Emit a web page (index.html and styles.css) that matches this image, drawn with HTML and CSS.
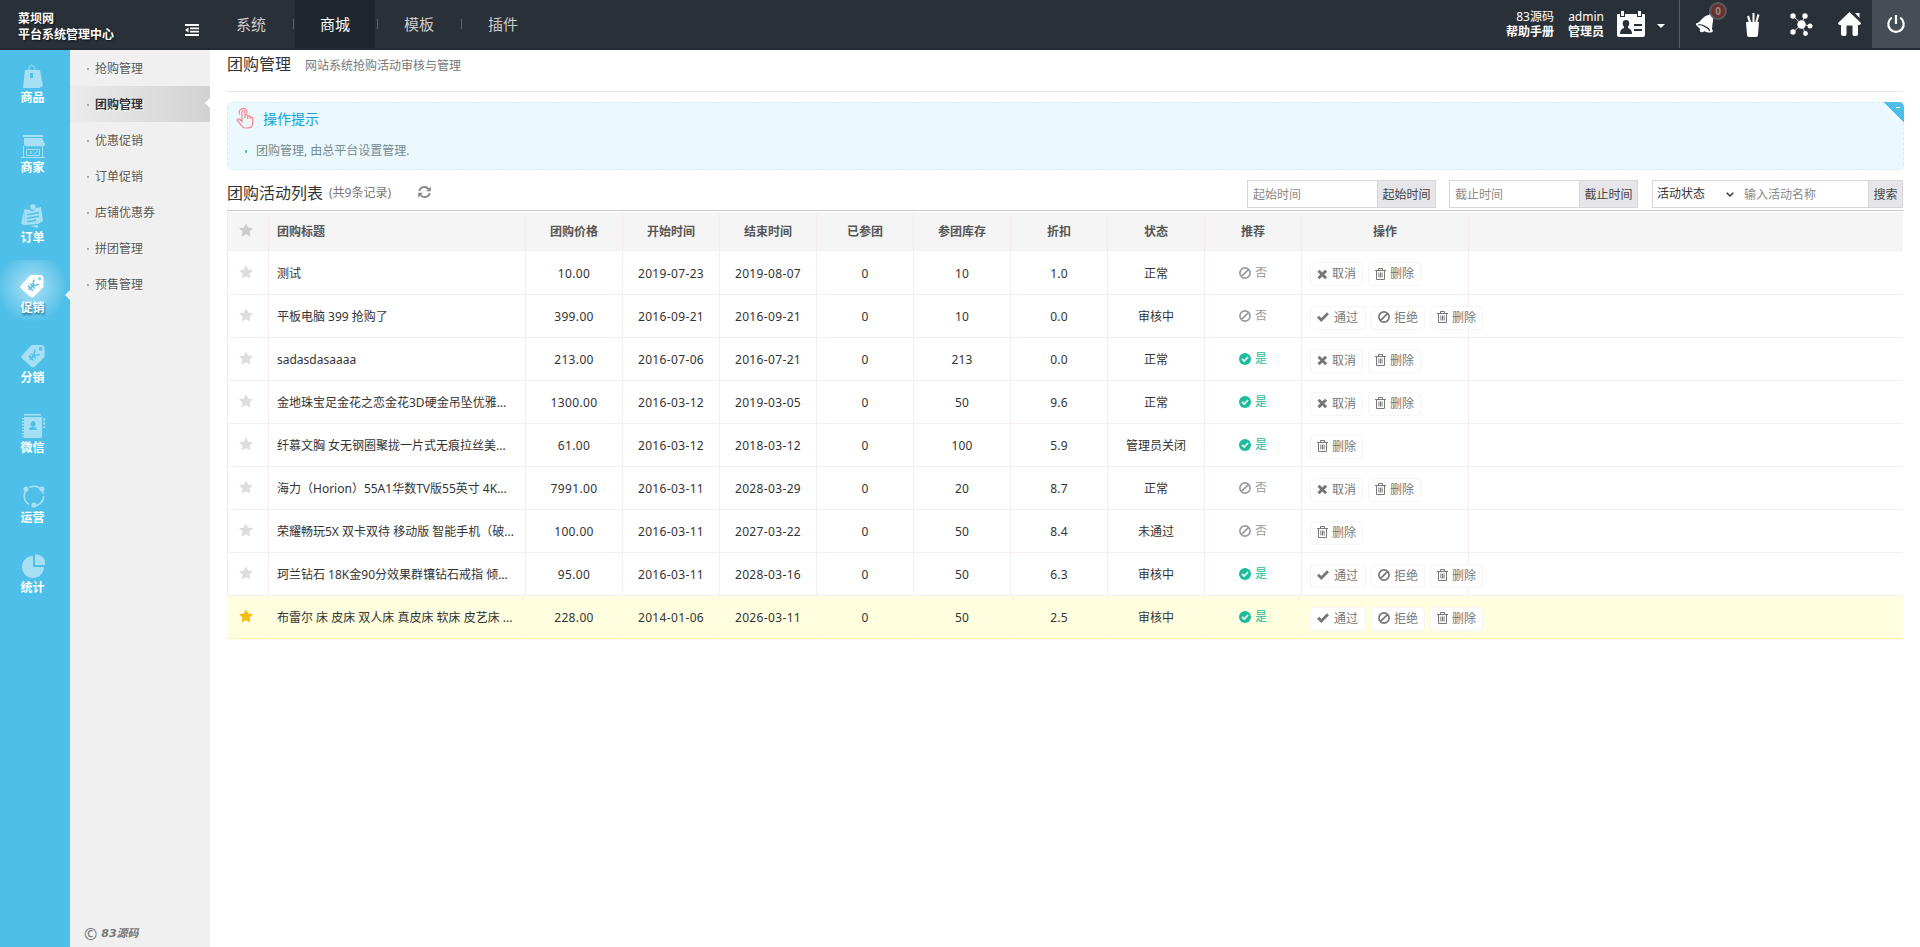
FILE: index.html
```html
<!DOCTYPE html>
<html lang="zh-CN">
<head>
    <meta charset="UTF-8">
    <title>团购管理</title>
    <link rel="stylesheet" href="styles.css">
</head>
<body>
    <svg class="symbols">
        <symbol id="star" viewBox="0 0 14 14"><path d="M7 .2l2.100 4.400 4.900.6-3.500 3.400.9 4.900L7 11.200l-4.400 2.300.9-4.900L0 5.200l4.900-.6z"/></symbol>
        <symbol id="ban" viewBox="0 0 12 12"><path d="M6 .9a5.1 5.1 0 1 0 0 10.2A5.1 5.1 0 0 0 6 .9zM2.6 9.4l6.8-6.8" fill="none" stroke="currentColor" stroke-width="1.700"/></symbol>
        <symbol id="yes" viewBox="0 0 12 12"><circle cx="6" cy="6" r="6"/><path d="M3 5.8l2.2 2.3L9.1 4" fill="none" stroke="#fff" stroke-width="1.7"/></symbol>
        <symbol id="check" viewBox="0 0 12 12"><path d="M1 5.8l3.3 3.200L11 2.300" fill="none" stroke="currentColor" stroke-width="2.8"/></symbol>
        <symbol id="times" viewBox="0 0 11 11"><path d="M1.5 1.7l7.6 7.6M9.1 1.7L1.5 9.3" fill="none" stroke="currentColor" stroke-width="3"/></symbol>
        <symbol id="trash" viewBox="0 0 11 12"><path d="M0 2.5h11M3.5 2.5v-2h4v2M1.5 2.5v9h8v-9M3.9 4.5v5M5.5 4.5v5M7.1 4.5v5" fill="none" stroke="currentColor"/></symbol>
        <symbol id="tag" viewBox="0 0 24 24"><path fill-rule="evenodd" d="M11.500 1H20q3.500 0 3.500 3.500V12q0 1-.8 1.800L14 22.500q-2 2-4 0L1 14.500q-1.500-1.500 0-3L9.500 2q1-1 2-1zM19.500 3a1.800 1.800 0 1 0 .1 0z"/><path transform="rotate(45 12.500 12)" d="M9 6.500l3.500 5 3.500-5M12.500 11.500v6M9 12h7M9 15h7" fill="none" stroke="#55c0e6" stroke-width="1.500"/></symbol>
    </svg>

    <header class="header">
        <div class="logo">菜坝网<br>平台系统管理中心</div>
        <svg class="toggle" viewBox="0 0 14 12"><path d="M0 1h14M5 4.300h9M5 7.700h9M0 11h14" stroke="#fff" stroke-width="1.800"/><path d="M3.500 3.500v5L0 6z" fill="#fff"/></svg>
        <nav class="top-nav">
            <a>系统</a>
            <a class="on">商城</a>
            <a>模板</a>
            <a>插件</a>
        </nav>
        <div class="user">
            <div>83源码<br><b>帮助手册</b></div>
            <div>admin<br><b>管理员</b></div>
            <svg class="card" viewBox="0 0 28 26"><path fill="#fff" fill-rule="evenodd" d="M1 3h2v3h5V3h12v3h5V3h2q1 0 1 1v20q0 2-2 2H2q-2 0-2-2V4q0-1 1-1zM9 9c-4 0-4 4-2 7v1q-4 1-4 6h12q0-5-4-6v-1c2-3 2-7-2-7zM17 13h8v2h-8zM17 18h8v2h-8z"/><path d="M5.500 0v5M22.500 0v5" stroke="#fff" stroke-width="3"/></svg>
            <i class="caret"></i>
        </div>
        <div class="tools">
            <a class="bell">
                <svg width="20" height="22" viewBox="0 0 20 22"><path fill="#fff" d="M15 0l2 1v2c2 2 1 5 .500 8l-.500 5 1 2c-1 2-5 2-9 0S0 12 1 10.500l2.500-1L8 5c2-2 4-3 6-3z"/><path d="M3 12c3-1 10 2 12 6" stroke="#2a3038" stroke-width="1.200" fill="none"/><circle cx="7" cy="17" r="2.300" fill="#fff"/></svg>
                <em>0</em>
            </a>
            <a><svg width="16" height="25" viewBox="0 0 16 25"><path fill="#fff" d="M1 10h13l-1 13q0 2-2 2H4q-2 0-2-2zM2 4.500l2-1L6.500 11H4zM7.500 1h2v10h-2zM12.500 2l2 1L12 11h-2z"/></svg></a>
            <a><svg width="23" height="23" viewBox="0 0 23 23"><path d="M3 3l8.500 8L15 2.500M3 19.500l8.500-8.500 8 2M11.500 11l4 10" stroke="#fff" stroke-width=".8" fill="none"/><g fill="#fff"><circle cx="11.500" cy="11.500" r="4.200"/><circle cx="3" cy="3" r="2.700"/><circle cx="15" cy="3" r="2.700"/><circle cx="20" cy="13" r="2.500"/><circle cx="3" cy="19" r="2.700"/><circle cx="15.500" cy="20.500" r="2.400"/></g></svg></a>
            <a><svg width="23" height="24" viewBox="0 0 23 24"><path fill="#fff" d="M11.500 0L23 11q0 2-2 2h-1v9q0 2-2 2h-2q-1.500 0-1.500-2v-8.500h-6V22q0 2-1.500 2H5q-2 0-2-2v-9H2q-2 0-2-2zM17 1h4.500v5z"/></svg></a>
            <a class="power"><svg width="20" height="20" viewBox="0 0 20 20"><path d="M5.800 3.700a7.700 7.700 0 1 0 8.400 0M10 1v9" fill="none" stroke="#fff" stroke-width="2.200"/></svg></a>
        </div>
    </header>

    <div class="wrap">
        <aside class="side">
            <a><svg viewBox="0 0 24 24"><path fill-rule="evenodd" d="M4 6h15l3 16-4 2H2zM9 9v5h3V9z"/><path d="M8 8V4q2-6 6 0v4" fill="none" stroke="currentColor"/></svg>商品</a>
            <a><svg viewBox="0 0 24 24"><path d="M2 1h20v2H2zM3 4h18l3 6q0 3-3 2-1.500 1-3 0-1.500 1-3 0-1.500 1-3 0-1.500 1-3 0-1.500 1-3 0-3 1-3-2z"/><path d="M2.500 12v11M21.500 12v11M0 23.500h24M5.500 15.500v6h13v-6zM10 17v3M13 20l4-3" fill="none" stroke="currentColor"/></svg>商家</a>
            <a><svg viewBox="0 0 24 24"><path fill-rule="evenodd" d="M3 5l6 1q3 3 6-2l5-1 2 14-5 3-13 1zM6 10l12-2v1.500L6 11.500zM6 13.500l12-2V13L6 15zM6 17l9-1.500V17l-9 1.500z"/><circle cx="12" cy="3" r="2.800"/><path d="M0 20L3 7l1 14zM9 22l8-1v3z"/></svg>订单</a>
            <a class="on"><svg viewBox="0 0 24 24"><use href="#tag"/></svg>促销</a>
            <a><svg viewBox="0 0 24 24"><use href="#tag"/></svg>分销</a>
            <a><svg viewBox="0 0 24 24"><path fill-rule="evenodd" d="M3 3h18v19q0 2-2 2H3zM12 7a2.500 3 0 1 0 .1 0zM8 16h8q0-3-4-3t-4 3zM3 0h17v1.500H3zM22.500 4H24v3h-1.500zM22.500 8H24v3h-1.500zM22.500 12H24v2h-1.500z"/><path d="M2 4v19" stroke="currentColor" stroke-width="2" stroke-dasharray="1.500 1.500"/></svg>微信</a>
            <a><svg viewBox="0 0 24 24"><circle cx="13" cy="12" r="9.800" fill="none" stroke="currentColor" stroke-width="1.600" stroke-dasharray="18 2.500"/><circle cx="5" cy="5" r="2.600"/><circle cx="21" cy="5" r="2.600"/><circle cx="13" cy="21" r="2.600"/></svg>运营</a>
            <a><svg viewBox="0 0 24 24"><path d="M12 2v11h11A11 11 0 1 1 12 2z"/><path d="M14 0q10 1 11 11H14z"/></svg>统计</a>
        </aside>

        <aside class="menu">
            <a>抢购管理</a>
            <a class="on">团购管理</a>
            <a>优惠促销</a>
            <a>订单促销</a>
            <a>店铺优惠券</a>
            <a>拼团管理</a>
            <a>预售管理</a>
            <div class="copy"><span>©</span> <em>83源码</em></div>
        </aside>

        <main class="main">
            <div class="page-title"><h3>团购管理</h3><h5>网站系统抢购活动审核与管理</h5></div>

            <div class="tips">
                <div class="tips-title">
                    <svg width="18" height="21" viewBox="0 0 18 21"><path d="M6 12V4q0-1.500 1.500-1.500T9 4v6-2.500q1.500-1.500 2.700 0V11 8.500q1.500-1.200 2.600.2V11 9.500q1.700-.8 2.400.8V15q0 5-5 5H9q-2 0-3.500-2.500L1 12q1-2 3-.5l2 2zM4 6.500q-2-3 .5-5 3-2 5.500 0 1.500 2 .7 4" fill="none" stroke="#f8838e" stroke-width="1.200"/></svg>
                    <h4>操作提示</h4>
                </div>
                <p>团购管理, 由总平台设置管理.</p>
                <i class="fold"></i>
            </div>

            <div class="list-bar">
                <h3>团购活动列表</h3>
                <h5>(共9条记录)</h5>
                <svg class="refresh" viewBox="0 0 13 12"><path d="M1.200 5A5.300 5.300 0 0 1 10.500 3M11.800 7A5.300 5.300 0 0 1 2.500 9" fill="none" stroke="#888" stroke-width="1.900"/><path d="M12.800.5v4.700H8zM.2 11.500V6.800H5z" fill="#888"/></svg>
                <form class="search">
                    <div class="box date"><input type="text" placeholder="起始时间"><button type="button">起始时间</button></div>
                    <div class="box date"><input type="text" placeholder="截止时间"><button type="button">截止时间</button></div>
                    <div class="box find">
                        <span class="select">活动状态<svg width="8" height="5" viewBox="0 0 8 5"><path d="M.7.7L4 4 7.300.7" fill="none" stroke="#333" stroke-width="1.400"/></svg></span>
                        <input type="text" placeholder="输入活动名称"><button type="button">搜索</button>
                    </div>
                </form>
            </div>

            <table class="grid">
                <colgroup>
                    <col class="c-star"><col class="c-title">
                    <col class="c-n"><col class="c-n"><col class="c-n"><col class="c-n">
                    <col class="c-n"><col class="c-n"><col class="c-n"><col class="c-n">
                    <col class="c-act"><col>
                </colgroup>
                <thead>
                    <tr><th><svg class="star"><use href="#star"/></svg></th><th class="l">团购标题</th><th>团购价格</th><th>开始时间</th><th>结束时间</th><th>已参团</th><th>参团库存</th><th>折扣</th><th>状态</th><th>推荐</th><th>操作</th><th></th></tr>
                </thead>
                <tbody>
                    <tr>
                        <td><svg class="star"><use href="#star"/></svg></td><td class="l">测试</td><td>10.00</td><td>2019-07-23</td><td>2019-08-07</td><td>0</td><td>10</td><td>1.0</td><td>正常</td>
                        <td><span class="no"><svg><use href="#ban"/></svg>否</span></td>
                        <td class="act"><div><a class="x"><svg><use href="#times"/></svg>取消</a><a><svg><use href="#trash"/></svg>删除</a></div></td><td></td>
                    </tr>
                    <tr>
                        <td><svg class="star"><use href="#star"/></svg></td><td class="l">平板电脑 399 抢购了</td><td>399.00</td><td>2016-09-21</td><td>2016-09-21</td><td>0</td><td>10</td><td>0.0</td><td>审核中</td>
                        <td><span class="no"><svg><use href="#ban"/></svg>否</span></td>
                        <td class="act"><div><a class="ok"><svg><use href="#check"/></svg>通过</a><a class="deny"><svg><use href="#ban"/></svg>拒绝</a><a><svg><use href="#trash"/></svg>删除</a></div></td><td></td>
                    </tr>
                    <tr>
                        <td><svg class="star"><use href="#star"/></svg></td><td class="l">sadasdasaaaa</td><td>213.00</td><td>2016-07-06</td><td>2016-07-21</td><td>0</td><td>213</td><td>0.0</td><td>正常</td>
                        <td><span class="yes"><svg><use href="#yes"/></svg>是</span></td>
                        <td class="act"><div><a class="x"><svg><use href="#times"/></svg>取消</a><a><svg><use href="#trash"/></svg>删除</a></div></td><td></td>
                    </tr>
                    <tr>
                        <td><svg class="star"><use href="#star"/></svg></td><td class="l">金地珠宝足金花之恋金花3D硬金吊坠优雅...</td><td>1300.00</td><td>2016-03-12</td><td>2019-03-05</td><td>0</td><td>50</td><td>9.6</td><td>正常</td>
                        <td><span class="yes"><svg><use href="#yes"/></svg>是</span></td>
                        <td class="act"><div><a class="x"><svg><use href="#times"/></svg>取消</a><a><svg><use href="#trash"/></svg>删除</a></div></td><td></td>
                    </tr>
                    <tr>
                        <td><svg class="star"><use href="#star"/></svg></td><td class="l">纤慕文胸 女无钢圈聚拢一片式无痕拉丝美...</td><td>61.00</td><td>2016-03-12</td><td>2018-03-12</td><td>0</td><td>100</td><td>5.9</td><td>管理员关闭</td>
                        <td><span class="yes"><svg><use href="#yes"/></svg>是</span></td>
                        <td class="act"><div><a><svg><use href="#trash"/></svg>删除</a></div></td><td></td>
                    </tr>
                    <tr>
                        <td><svg class="star"><use href="#star"/></svg></td><td class="l">海力（Horion）55A1华数TV版55英寸 4K...</td><td>7991.00</td><td>2016-03-11</td><td>2028-03-29</td><td>0</td><td>20</td><td>8.7</td><td>正常</td>
                        <td><span class="no"><svg><use href="#ban"/></svg>否</span></td>
                        <td class="act"><div><a class="x"><svg><use href="#times"/></svg>取消</a><a><svg><use href="#trash"/></svg>删除</a></div></td><td></td>
                    </tr>
                    <tr>
                        <td><svg class="star"><use href="#star"/></svg></td><td class="l">荣耀畅玩5X 双卡双待 移动版 智能手机（破...</td><td>100.00</td><td>2016-03-11</td><td>2027-03-22</td><td>0</td><td>50</td><td>8.4</td><td>未通过</td>
                        <td><span class="no"><svg><use href="#ban"/></svg>否</span></td>
                        <td class="act"><div><a><svg><use href="#trash"/></svg>删除</a></div></td><td></td>
                    </tr>
                    <tr>
                        <td><svg class="star"><use href="#star"/></svg></td><td class="l">珂兰钻石 18K金90分效果群镶钻石戒指 倾...</td><td>95.00</td><td>2016-03-11</td><td>2028-03-16</td><td>0</td><td>50</td><td>6.3</td><td>审核中</td>
                        <td><span class="yes"><svg><use href="#yes"/></svg>是</span></td>
                        <td class="act"><div><a class="ok"><svg><use href="#check"/></svg>通过</a><a class="deny"><svg><use href="#ban"/></svg>拒绝</a><a><svg><use href="#trash"/></svg>删除</a></div></td><td></td>
                    </tr>
                    <tr class="selected">
                        <td><svg class="star"><use href="#star"/></svg></td><td class="l">布雷尔 床 皮床 双人床 真皮床 软床 皮艺床 ...</td><td>228.00</td><td>2014-01-06</td><td>2026-03-11</td><td>0</td><td>50</td><td>2.5</td><td>审核中</td>
                        <td><span class="yes"><svg><use href="#yes"/></svg>是</span></td>
                        <td class="act"><div><a class="ok"><svg><use href="#check"/></svg>通过</a><a class="deny"><svg><use href="#ban"/></svg>拒绝</a><a><svg><use href="#trash"/></svg>删除</a></div></td><td></td>
                    </tr>
                </tbody>
            </table>
        </main>
    </div>
</body>
</html>
```

FILE: styles.css
```css
* {
    box-sizing: border-box;
}
body {
    margin: 0;
    height: 947px;
    overflow: hidden;
    font: 12px/18px "Noto Sans", "Noto Sans CJK SC", sans-serif;
    color: #333;
    background: #fff;
}
h3, h4, h5, p {
    margin: 0;
    font-weight: normal;
}
svg {
    display: block;
    fill: currentColor;
}
.symbols {
    display: none;
}

/* header */
.header {
    display: flex;
    height: 50px;
    background: #2a3038;
    border-bottom: 2px solid #242a33;
    color: #fff;
}
.logo {
    width: 185px;
    padding: 11px 0 0 18px;
    line-height: 16px;
    font-weight: bold;
    text-shadow: 1px 1px 2px #111;
}
.toggle {
    width: 14px;
    height: 12px;
    margin-top: 24px;
}
.top-nav {
    display: flex;
    margin-left: 12px;
}
.top-nav a {
    width: 80px;
    margin-right: 4px;
    font-size: 15px;
    line-height: 48px;
    text-align: center;
    color: #ccc;
    position: relative;
}
.top-nav a:not(:last-child)::after {
    content: "";
    position: absolute;
    left: 82px;
    top: 19px;
    width: 1px;
    height: 10px;
    background: #5d636b;
}
.top-nav .on {
    background: #20262e;
    color: #fff;
}
.user {
    display: flex;
    margin-left: auto;
    padding-right: 14px;
    border-right: 1px solid #565c65;
    text-align: right;
    line-height: 15px;
}
.user div {
    margin: 9px 0 0 14px;
}
.card {
    width: 28px;
    height: 26px;
    margin: 11px 12px 0 13px;
}
.caret {
    margin-top: 24px;
    width: 8px;
    height: 4px;
    border: 4px solid transparent;
    border-top-color: #fff;
    border-bottom: 0;
}
.tools {
    display: flex;
}
.tools a {
    width: 48px;
    height: 48px;
    padding-left: 2px;
    display: flex;
    align-items: center;
    justify-content: center;
    position: relative;
}
.bell em {
    position: absolute;
    left: 29px;
    top: 2px;
    width: 18px;
    height: 18px;
    border: 2px solid #595b60;
    border-radius: 50%;
    background: #6c3029;
    color: #8d8d8f;
    font: bold 10px/14px "Noto Sans", sans-serif;
    text-align: center;
}
.tools .power {
    padding: 0;
    background: #474d55;
}

.wrap {
    display: flex;
    height: 897px;
}

/* first level icons */
.side {
    width: 70px;
    background: #4ebfe8;
    color: #fff;
}
.side a {
    display: block;
    height: 70px;
    padding: 14px 5px 0 0;
    text-align: center;
    font-weight: bold;
    line-height: 20px;
    position: relative;
}
.side svg {
    width: 24px;
    height: 24px;
    margin: 0 auto;
    color: #a7dff4;
}
.side .on {
    background: radial-gradient(circle at 32px 27px, #b2e3f6 0, #8bd4f0 14px, #4ebfe8 36px);
    text-shadow: 1px 2px 2px #2e7695;
}
.side .on svg {
    color: #fff;
    transform: translateX(-1px);
}
.side .on::after {
    content: "";
    position: absolute;
    right: 0;
    top: 30px;
    border: 5px solid transparent;
    border-right-color: #f0f0f0;
    border-left: 0;
}

/* second level menu */
.menu {
    width: 140px;
    display: flex;
    flex-direction: column;
    background: #f0f0f0;
    color: #555;
}
.menu a {
    height: 36px;
    padding-left: 17px;
    line-height: 37px;
    text-shadow: 1px 1px 0 #fff;
    position: relative;
}
.menu a::before {
    content: "";
    display: inline-block;
    width: 2px;
    height: 2px;
    margin-right: 6px;
    vertical-align: 3px;
    background: #aaa;
}
.menu .on {
    background: linear-gradient(90deg, #ecebeb, #d2d2d2);
    color: #333;
    font-weight: bold;
}
.menu .on::after {
    content: "";
    position: absolute;
    right: 0;
    top: 12px;
    border: 5px solid transparent;
    border-right-color: #fff;
    border-left: 0;
}
.copy {
    display: flex;
    gap: 4px;
    align-items: center;
    margin-top: auto;
    padding: 0 0 4px 14px;
    color: #777;
}
.copy span {
    font-size: 16px;
}
.copy em {
    font-family: "DejaVu Sans", "Noto Sans CJK SC", sans-serif;
    font-size: 11px;
    font-weight: bold;
}

/* content */
.main {
    flex: 1;
    padding: 0 17px 0 227px;
    padding-left: 17px;
}
.page-title {
    display: flex;
    gap: 14px;
    height: 42px;
    border-bottom: 1px solid #e6e6e6;
}
.page-title h3 {
    font-size: 16px;
    line-height: 28px;
}
.page-title h5 {
    font-size: 12px;
    line-height: 31px;
    color: #777;
}
.tips {
    height: 68px;
    margin: 10px -1px 0 0;
    padding: 5px 8px;
    border: 1px dashed #d3effa;
    border-radius: 5px;
    background: #ebf8fe;
    position: relative;
}
.tips-title {
    display: flex;
    gap: 9px;
    align-items: center;
    height: 21px;
}
.tips-title h4 {
    font-size: 14px;
    color: #0ba4da;
}
.tips p {
    margin: 12px 0 0 9px;
    line-height: 20px;
    color: #748a8f;
}
.tips p::before {
    content: "";
    display: inline-block;
    width: 2px;
    height: 3px;
    margin-right: 9px;
    vertical-align: 2px;
    background: #4cc9b8;
}
.fold {
    position: absolute;
    right: -1px;
    top: -1px;
    width: 20px;
    height: 20px;
    border-radius: 0 5px 0 0;
    background: linear-gradient(#fff, #fff) no-repeat 12px 5px / 4px 1px, linear-gradient(45deg, transparent 50%, #4ebfe8 50%);
}
.list-bar {
    display: flex;
    height: 41px;
    border-bottom: 1px solid #c8c8c8;
    line-height: 46px;
}
.list-bar h3 {
    font-size: 16px;
    line-height: 46px;
}
.list-bar h5 {
    margin-left: 6px;
    font-size: 12px;
    color: #777;
}
.refresh {
    width: 13px;
    height: 12px;
    margin: 16px 0 0 27px;
}
.search {
    display: flex;
    gap: 13px;
    margin: 10px 0 0 auto;
    color: #333;
}
.box {
    display: flex;
    height: 28px;
    border: 1px solid #d7d7d7;
    line-height: 28px;
}
.date {
    width: 189px;
}
.find {
    width: 251px;
    margin-left: 1px;
}
.box input {
    flex: 1;
    min-width: 0;
    padding: 2px 5px 0;
    border: 0;
    font: inherit;
    background: none;
}
.box input::placeholder {
    color: #8a8a8a;
}
.box button {
    width: 58px;
    padding: 2px 0 0;
    border: 0;
    border-left: 1px solid #d7d7d7;
    background: #e6e6ea;
    font: inherit;
    line-height: 24px;
    color: #444;
}
.find button {
    width: 34px;
}
.select {
    display: flex;
    gap: 21px;
    align-items: center;
    width: 86px;
    padding-left: 4px;
}

/* table */
.grid {
    width: 100%;
    margin-top: 1px;
    table-layout: fixed;
    border-collapse: separate;
    border-spacing: 0;
}
.c-star { width: 42px; }
.c-title { width: 257px; }
.c-n { width: 97px; }
.c-act { width: 167px; }
.grid th, .grid td {
    padding: 0;
    border-right: 1px solid #f5edf0;
    border-bottom: 1px solid #f5edf0;
    text-align: center;
    white-space: nowrap;
}
.grid th:first-child, .grid td:first-child {
    border-left: 1px solid #efecee;
    padding-right: 4px;
}
.grid th:last-child, .grid td:last-child {
    border-right: 0;
}
.grid th {
    height: 39px;
    padding-top: 2px;
    background: #f5f5f5;
    color: #555;
}
.grid td {
    height: 43px;
    padding-top: 2px;
    letter-spacing: .2px;
}
.grid tbody tr:first-child td {
    height: 44px;
}
.grid .l {
    padding-left: 8px;
    text-align: left;
    letter-spacing: 0;
}
.grid td:nth-child(3), .grid td:nth-child(4), .grid td:nth-child(5) {
    letter-spacing: .35px;
}
.grid td:nth-child(9) {
    letter-spacing: 0;
}
.star {
    width: 14px;
    height: 14px;
    margin: 0 auto;
    color: #ddd;
    position: relative;
    top: -2px;
}
th .star {
    color: #ccc;
}
.yes, .no {
    display: inline-flex;
    gap: 4px;
    align-items: center;
    letter-spacing: 0;
    color: #1abc9c;
}
.no {
    color: #999ca0;
}
.yes svg, .no svg {
    width: 12px;
    height: 12px;
}
.act div {
    display: flex;
    gap: 5px;
    margin: 1px 0 0 8px;
    letter-spacing: 0;
}
.act a {
    flex: none;
    display: flex;
    gap: 4px;
    align-items: center;
    width: 53px;
    height: 24px;
    padding-left: 6px;
    border: 1px solid #f5f5f5;
    border-radius: 4px;
    background: #fff;
    color: #777;
    position: relative;
}
.act a svg {
    width: 11px;
    height: 12px;
    margin-top: -1px;
}
.act .x svg {
    height: 11px;
    margin-top: 0;
}
.act .ok {
    width: 56px;
    gap: 5px;
}
.act .ok svg, .act .deny svg {
    width: 12px;
}
.act .deny {
    width: 54px;
}
.grid .selected td {
    background: #ffffdf;
    border-color: #ffffdf;
    border-bottom-color: #ffebb0;
}
.selected .star {
    color: #f6bd0f;
}
```
